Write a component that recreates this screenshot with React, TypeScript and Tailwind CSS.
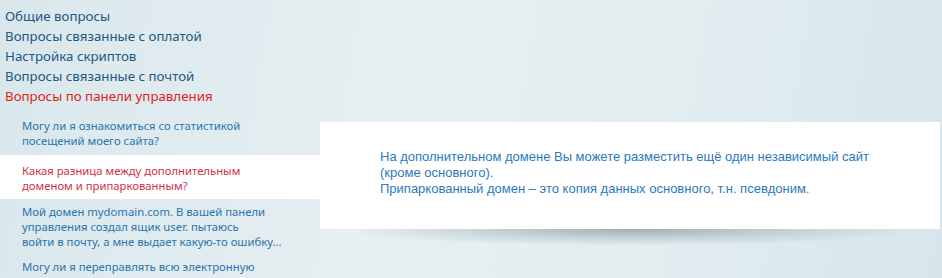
import React from 'react';

const topics = [
  { label: 'Общие вопросы' },
  { label: 'Вопросы связанные с оплатой' },
  { label: 'Настройка скриптов' },
  { label: 'Вопросы связанные с почтой' },
  { label: 'Вопросы по панели управления', active: true },
];

const questions = [
  { lines: ['Могу ли я ознакомиться со статистикой', 'посещений моего сайта?'] },
  { lines: ['Какая разница между дополнительным', 'доменом и припаркованным?'], active: true },
  {
    lines: [
      'Мой домен mydomain.com. В вашей панели',
      'управления создал ящик user. пытаюсь',
      'войти в почту, а мне выдает какую-то ошибку...',
    ],
  },
  { lines: ['Могу ли я переправлять всю электронную', 'корреспонденцию с моего домена на другой'] },
];

const App: React.FC = () => {
  return (
    <div className="relative h-[278px] w-[942px] overflow-hidden bg-[linear-gradient(100deg,#d9e7ec_0%,#e6eff2_40%,#e4eef1_65%,#d6e6eb_100%)]">
      {/* Topics */}
      <ul className="pt-[6px] pl-[5px] font-['Noto_Sans',sans-serif] text-[13.3px] leading-[20px]">
        {topics.map((t) => (
          <li key={t.label} className={t.active ? 'text-[#e0221c]' : 'text-[#245784]'}>
            {t.label}
          </li>
        ))}
      </ul>

      <div className="mt-[7px] flex items-start">
        {/* Questions */}
        <ul className="w-[320px] font-['Noto_Sans',sans-serif] text-[11.3px] leading-[15px]">
          {questions.map((q, i) => (
            <li
              key={i}
              className={
                q.active
                  ? 'mt-[2px] bg-white pl-[22px] pt-[8px] pb-[6px] text-[#cf3048]'
                  : 'pl-[22px] py-[5px] text-[#2a74ad]'
              }
            >
              {q.lines.map((l) => (
                <div key={l} className="whitespace-nowrap">{l}</div>
              ))}
            </li>
          ))}
        </ul>

        {/* Answer panel */}
        <div className="relative mt-[9px] h-[107px] w-[620px] bg-white pl-[60px] pt-[27px] font-['Liberation_Sans',Arial,sans-serif] text-[13px] leading-[16px] text-[#2c79bb]">
          <p>На дополнительном домене Вы можете разместить ещё один независимый сайт</p>
          <p>(кроме основного).</p>
          <p>Припаркованный домен – это копия данных основного, т.н. псевдоним.</p>
          <div className="absolute left-[40px] right-[40px] top-full h-[16px] bg-[radial-gradient(ellipse_at_top,rgba(60,80,90,0.4)_0%,rgba(60,80,90,0.14)_45%,rgba(60,80,90,0)_75%)]" />
        </div>
      </div>
    </div>
  );
};

export default App;
